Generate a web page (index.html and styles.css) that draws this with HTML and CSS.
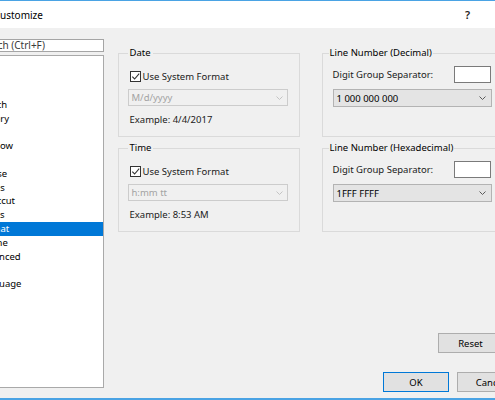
FILE: index.html
```html
<!DOCTYPE html>
<html lang="en">
<head>
  <meta charset="UTF-8">
  <title>Customize</title>
  <link rel="stylesheet" href="styles.css">
</head>
<body>
<div class="dlg">
  <!--title bar-->
  <div class="dlg_title">
    <span class="title_text">Customize</span>
    <span class="title_btn help">?</span>
    <span class="title_btn close">&#x2715;</span>
  </div>
  <div class="dlg_body">
    <!--left: search + categories-->
    <div class="side">
      <input type="text" class="search" placeholder="Search (Ctrl+F)">
      <ul class="cat_list">
        <li>File</li>
        <li>Edit</li>
        <li>Save</li>
        <li>Search</li>
        <li>History</li>
        <li>Tab</li>
        <li>Window</li>
        <li>Text</li>
        <li>Mouse</li>
        <li>Status</li>
        <li>Shortcut</li>
        <li>Marks</li>
        <li class="selected">Format</li>
        <li>Theme</li>
        <li>Advanced</li>
        <li>Misc</li>
        <li>Language</li>
      </ul>
    </div>
    <!--right: settings page-->
    <div class="panel">
      <div class="groups">
        <fieldset class="group g_left">
          <legend>Date</legend>
          <label class="check"><span class="box"><svg width="9" height="9" viewBox="0 0 9 9"><path d="M1.3 4.6 L3.6 7 L8.2 1.6" /></svg></span>Use System Format</label>
          <div class="combo disabled"><span>M/d/yyyy</span><svg class="arrow" width="7" height="4" viewBox="0 0 7 4"><polyline points="0.5,0.5 3.5,3.5 6.5,0.5" /></svg></div>
          <p class="example">Example: 4/4/2017</p>
        </fieldset>
        <fieldset class="group g_right">
          <legend>Line Number (Decimal)</legend>
          <div class="sep_row"><span>Digit Group Separator:</span><input type="text" class="sep_input"></div>
          <div class="combo"><span>1 000 000 000</span><svg class="arrow" width="7" height="4" viewBox="0 0 7 4"><polyline points="0.5,0.5 3.5,3.5 6.5,0.5" /></svg></div>
        </fieldset>
        <fieldset class="group g_left">
          <legend>Time</legend>
          <label class="check"><span class="box"><svg width="9" height="9" viewBox="0 0 9 9"><path d="M1.3 4.6 L3.6 7 L8.2 1.6" /></svg></span>Use System Format</label>
          <div class="combo disabled"><span>h:mm tt</span><svg class="arrow" width="7" height="4" viewBox="0 0 7 4"><polyline points="0.5,0.5 3.5,3.5 6.5,0.5" /></svg></div>
          <p class="example">Example: 8:53 AM</p>
        </fieldset>
        <fieldset class="group g_right">
          <legend>Line Number (Hexadecimal)</legend>
          <div class="sep_row"><span>Digit Group Separator:</span><input type="text" class="sep_input"></div>
          <div class="combo"><span>1FFF FFFF</span><svg class="arrow" width="7" height="4" viewBox="0 0 7 4"><polyline points="0.5,0.5 3.5,3.5 6.5,0.5" /></svg></div>
        </fieldset>
      </div>
      <div class="reset_row"><button class="btn">Reset</button></div>
      <div class="btn_row">
        <button class="btn ok">OK</button>
        <button class="btn">Cancel</button>
      </div>
    </div>
  </div>
</div>
</body>
</html>
```

FILE: styles.css
```css
*{
  margin: 0;
  padding: 0;
  box-sizing: border-box;
}
body{
  background: #f0f0f0;
  overflow: hidden;
  font-family: "Noto Sans", "Open Sans", sans-serif;
  font-size: 9.5px;
  color: #1a1a1a;
}
/*the dialog is wider than the view, its left part is cut off*/
.dlg{
  width: 575px;
  height: 400px;
  margin-left: -40px;
  border-top: 1px solid #4aa3e4;
  border-bottom: 2px solid #4aa3e4;
  display: flex;
  flex-direction: column;
}
.dlg_title{
  height: 27px;
  background: white;
  display: flex;
  align-items: center;
  padding-left: 33.7px;
  font-size: 10px;
  color: #000;
}
.title_btn{
  width: 45px;
  text-align: center;
}
.help{
  margin-left: auto;
  font-size: 11px;
  font-weight: 600;
  color: #222;
}
.close{
  font-size: 10px;
}
.dlg_body{
  flex: 1;
  display: flex;
  gap: 13.5px;
  padding: 11px 11px 6px 9px;
}
/*left column*/
.side{
  width: 135px;
  display: flex;
  flex-direction: column;
  padding-bottom: 4px;
}
.search{
  height: 12.5px;
  border: 1px solid #a5a5a5;
  background: white;
  padding: 0 7px;
  font: inherit;
  font-size: 10px;
  line-height: 10px;
  outline: none;
}
.search::placeholder{
  color: #3a3a3a;
}
.cat_list{
  flex: 1;
  margin-top: 3.5px;
  list-style: none;
  background: white;
  border: 1px solid #a9a9a9;
  padding-top: 0.8px;
}
.cat_list li{
  height: 13.77px;
  line-height: 13.77px;
  padding-left: 7px;
  color: #000;
  white-space: nowrap;
}
.cat_list li.selected{
  background: #0078d7;
  color: white;
}
/*right column*/
.panel{
  flex: 1;
  display: flex;
  flex-direction: column;
  padding-top: 8px;
}
.groups{
  display: grid;
  grid-template-columns: 182px 182px;
  grid-template-rows: 90px 90px;
  column-gap: 22px;
  row-gap: 5px;
}
.group{
  min-width: 0;
  border: 1px solid #dadada;
  padding: 0 9px;
}
.group legend{
  padding: 0 2px;
  line-height: 12px;
  color: #000;
}
.g_right{
  padding-left: 10px;
}
.g_right legend{
  margin-left: -4px;
  padding: 0 1px;
}
.check{
  display: flex;
  align-items: center;
  height: 15px;
  margin: 10px 0 0 2px;
}
.box{
  width: 11px;
  height: 11px;
  border: 1px solid #333;
  background: white;
  margin-right: 2px;
  display: flex;
}
.box path{
  fill: none;
  stroke: #333;
  stroke-width: 1.1;
}
.combo{
  display: flex;
  align-items: center;
  justify-content: space-between;
  border: 1px solid #b3b3b3;
  background: #e4e4e4;
  padding: 0 5px 0 3px;
  color: #000;
}
.combo .arrow polyline{
  fill: none;
  stroke: #5a5a5a;
  stroke-width: 1;
}
.g_left .combo{
  width: 160px;
  height: 17px;
  margin-top: 5px;
}
.g_right .combo{
  width: 159px;
  height: 18px;
  margin-top: 6px;
}
.combo.disabled{
  border-color: #cccccc;
  background: #f0f0f0;
  color: #a3a3a3;
  padding-right: 3.5px;
}
.combo.disabled .arrow polyline{
  stroke: #c4c4c4;
}
.example{
  margin: 7px 0 0 2px;
  line-height: 14px;
}
.sep_row{
  width: 158px;
  height: 17px;
  margin-top: 7px;
  display: flex;
  align-items: center;
  justify-content: space-between;
}
.sep_input{
  width: 37px;
  height: 17px;
  border: 1px solid #7a7a7a;
  background: white;
  outline: none;
}
/*buttons*/
.reset_row{
  margin-top: auto;
  display: flex;
  justify-content: flex-end;
  padding-right: 20.5px;
}
.btn_row{
  margin-top: 19px;
  display: flex;
  justify-content: flex-end;
  gap: 8px;
}
.btn{
  width: 66px;
  height: 20px;
  border: 1px solid #adadad;
  background: #e1e1e1;
  font: inherit;
  color: #000;
}
.btn_row .btn:last-child{
  width: 67px;
}
.ok{
  border-color: #0078d7;
}
```
